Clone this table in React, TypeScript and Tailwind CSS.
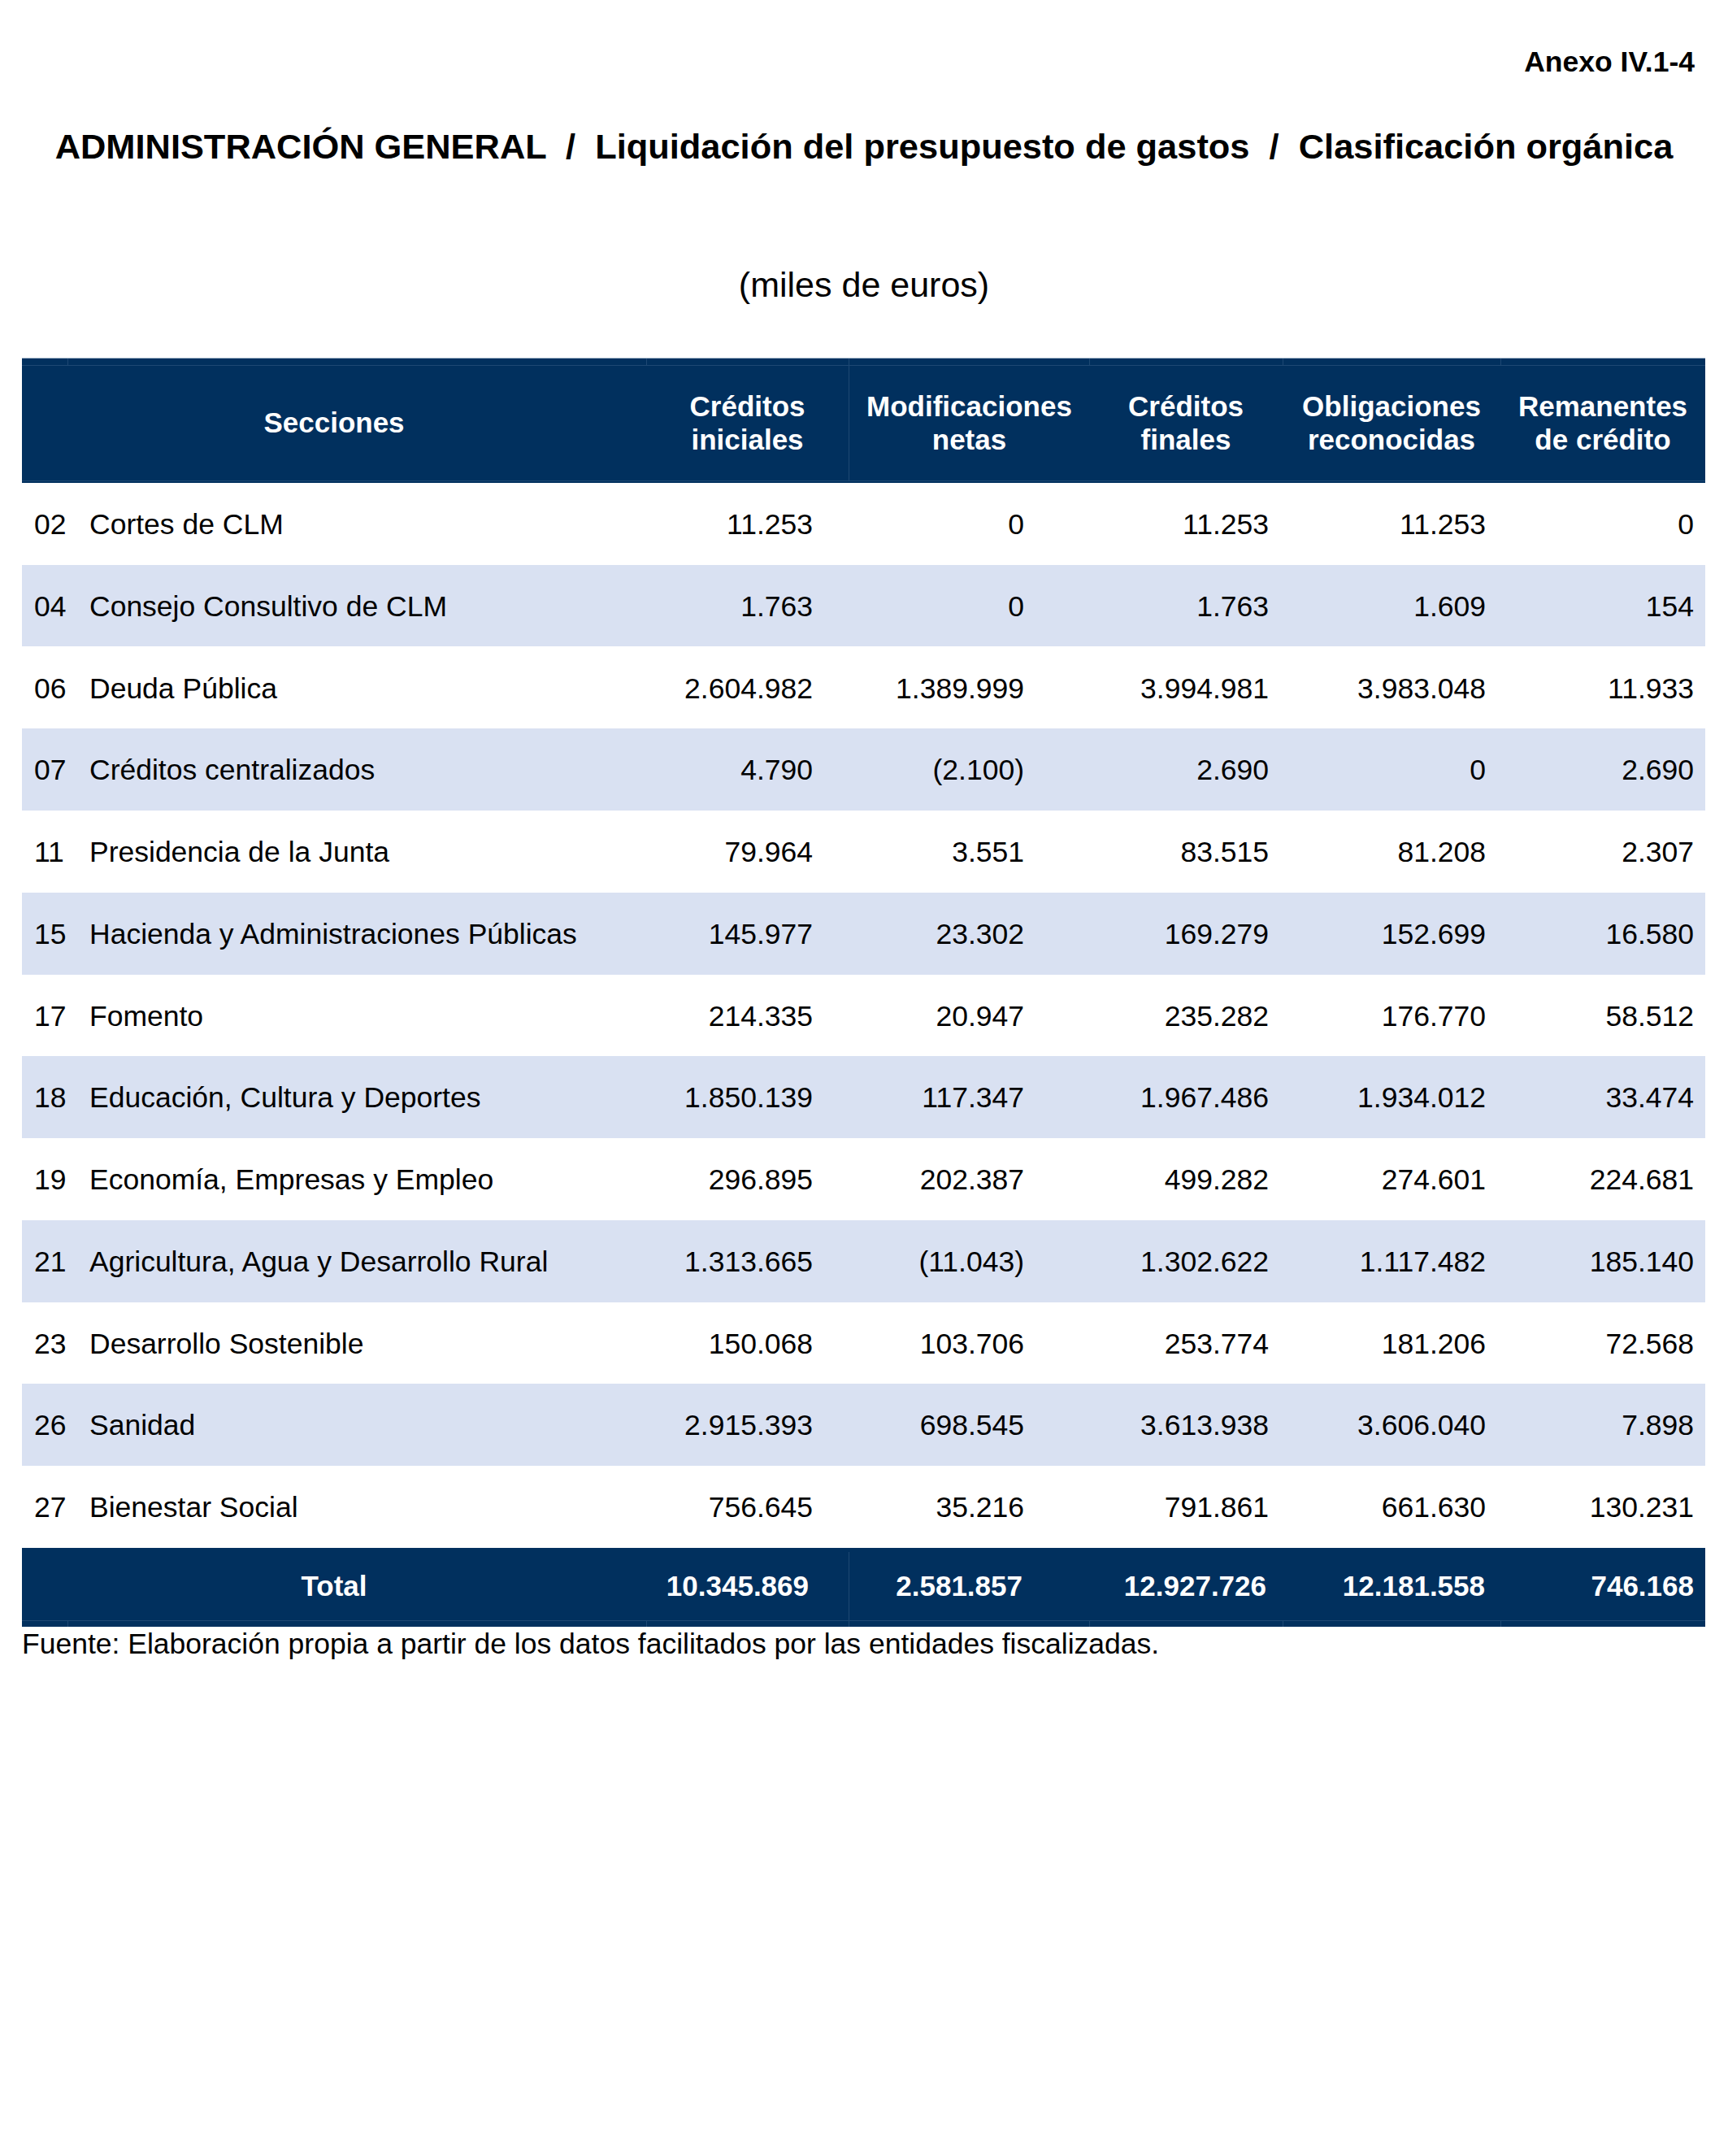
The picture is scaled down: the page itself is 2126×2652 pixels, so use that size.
import React from "react";

type Row = { code: string; name: string; v: string[] };

const rows: Row[] = [
  { code: "02", name: "Cortes de CLM", v: ["11.253", "0", "11.253", "11.253", "0"] },
  { code: "04", name: "Consejo Consultivo de CLM", v: ["1.763", "0", "1.763", "1.609", "154"] },
  { code: "06", name: "Deuda Pública", v: ["2.604.982", "1.389.999", "3.994.981", "3.983.048", "11.933"] },
  { code: "07", name: "Créditos centralizados", v: ["4.790", "(2.100)", "2.690", "0", "2.690"] },
  { code: "11", name: "Presidencia de la Junta", v: ["79.964", "3.551", "83.515", "81.208", "2.307"] },
  { code: "15", name: "Hacienda y Administraciones Públicas", v: ["145.977", "23.302", "169.279", "152.699", "16.580"] },
  { code: "17", name: "Fomento", v: ["214.335", "20.947", "235.282", "176.770", "58.512"] },
  { code: "18", name: "Educación, Cultura y Deportes", v: ["1.850.139", "117.347", "1.967.486", "1.934.012", "33.474"] },
  { code: "19", name: "Economía, Empresas y Empleo", v: ["296.895", "202.387", "499.282", "274.601", "224.681"] },
  { code: "21", name: "Agricultura, Agua y Desarrollo Rural", v: ["1.313.665", "(11.043)", "1.302.622", "1.117.482", "185.140"] },
  { code: "23", name: "Desarrollo Sostenible", v: ["150.068", "103.706", "253.774", "181.206", "72.568"] },
  { code: "26", name: "Sanidad", v: ["2.915.393", "698.545", "3.613.938", "3.606.040", "7.898"] },
  { code: "27", name: "Bienestar Social", v: ["756.645", "35.216", "791.861", "661.630", "130.231"] },
];

const totals = ["10.345.869", "2.581.857", "12.927.726", "12.181.558", "746.168"];

const grid = "grid grid-cols-[768px_249px_296px_238px_268px_252px]";
const numPad = ["pr-[44px]", "pr-[80px]", "pr-[17px]", "pr-[18px]", "pr-[14px]"];
const totPad = ["pr-[49px]", "pr-[82px]", "pr-[20px]", "pr-[19px]", "pr-[14px]"];

function Band({ h }: { h: string }) {
  return (
    <div className={`${grid} ${h}`}>
      <div className="flex">
        <div className="w-[57px] border-r border-[#1d4873]" />
        <div className="flex-1" />
      </div>
      <div className="border-l border-[#1d4873]" />
      <div className="border-l border-[#1d4873]" />
      <div className="border-l border-[#1d4873]" />
      <div className="border-l border-[#1d4873]" />
      <div className="border-l border-[#1d4873]" />
    </div>
  );
}

export default function App() {
  return (
    <div className="w-[2126px] min-h-[2652px] bg-white text-black font-['Liberation_Sans',Arial,sans-serif]">
      <div className="pt-[59px] pr-[41px] text-right text-[35.5px] leading-none font-bold">
        Anexo IV.1-4
      </div>
      <h1 className="mt-[64px] text-center text-[43.4px] leading-none font-bold whitespace-pre">
        {"ADMINISTRACIÓN GENERAL  /  Liquidación del presupuesto de gastos  /  Clasificación orgánica"}
      </h1>
      <div className="mt-[127px] text-center text-[43px] leading-none">(miles de euros)</div>

      <div className="mt-[68px] mx-[27px] w-[2071px]">
        {/* header */}
        <div className="bg-[#01305e] border-t border-[#a9b8ca] text-white font-bold text-[35px]">
          <Band h="h-[8px]" />
          <div className="border-t border-[#1d4873]">
            <div className={`${grid} h-[141px]`}>
              <div className="flex items-center justify-center">Secciones</div>
              <div className="flex items-center justify-center text-center leading-[41px]">
                Créditos<br />iniciales
              </div>
              <div className="flex items-center justify-center text-center leading-[41px] border-l border-[#1d4873]">
                Modificaciones<br />netas
              </div>
              <div className="flex items-center justify-center text-center leading-[41px]">
                Créditos<br />finales
              </div>
              <div className="flex items-center justify-center text-center leading-[41px]">
                Obligaciones<br />reconocidas
              </div>
              <div className="flex items-center justify-center text-center leading-[41px]">
                Remanentes<br />de crédito
              </div>
            </div>
          </div>
          <div className="border-t border-[#1d4873] h-[3px]" />
        </div>

        {/* body */}
        {rows.map((r, i) => (
          <div
            key={r.code}
            className={`${grid} h-[100.77px] pt-[3px] text-[35.5px] leading-none ${i % 2 === 1 ? "bg-[#d9e1f2]" : "bg-white"}`}
          >
            <div className="flex items-center">
              <span className="w-[83px] pl-[15px]">{r.code}</span>
              <span>{r.name}</span>
            </div>
            {r.v.map((v, j) => (
              <div key={j} className={`flex items-center justify-end ${numPad[j]}`}>
                {v}
              </div>
            ))}
          </div>
        ))}

        {/* total */}
        <div className="bg-[#01305e] text-white font-bold text-[35px] leading-none">
          <div className={`${grid} h-[89px] pt-[5px]`}>
            <div className="flex items-center justify-center">Total</div>
            {totals.map((v, j) => (
              <div
                key={j}
                className={`flex items-center justify-end ${totPad[j]} ${j === 1 ? "border-l border-[#1d4873]" : ""}`}
              >
                {v}
              </div>
            ))}
          </div>
          <div className="border-t border-[#1d4873]">
            <Band h="h-[7px]" />
          </div>
        </div>

        <div className="text-[35.5px] leading-[43px]">
          Fuente: Elaboración propia a partir de los datos facilitados por las entidades fiscalizadas.
        </div>
      </div>
    </div>
  );
}
